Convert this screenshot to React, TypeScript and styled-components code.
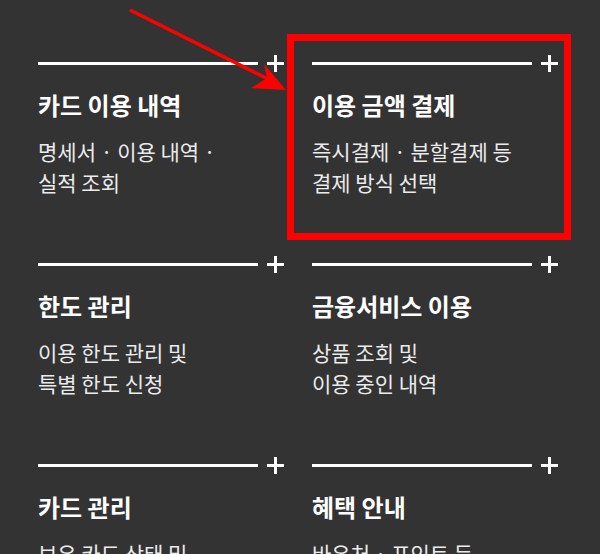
import React from "react";
import { styled, createGlobalStyle } from "styled-components";

interface MenuItem {
  title: string;
  lines: string[];
}

const menuItems: MenuItem[] = [
  { title: "카드 이용 내역", lines: ["명세서 · 이용 내역 ·", "실적 조회"] },
  { title: "이용 금액 결제", lines: ["즉시결제 · 분할결제 등", "결제 방식 선택"] },
  { title: "한도 관리", lines: ["이용 한도 관리 및", "특별 한도 신청"] },
  { title: "금융서비스 이용", lines: ["상품 조회 및", "이용 중인 내역"] },
  { title: "카드 관리", lines: ["보유 카드 상태 및", "분실 · 재발급 신청"] },
  { title: "혜택 안내", lines: ["바우처 · 포인트 등", "이벤트 혜택 확인"] },
];

const GlobalStyle = createGlobalStyle`
  html, body {
    margin: 0;
    padding: 0;
    background: #333333;
  }
  body {
    font-family: "Noto Sans CJK KR", "Noto Sans", sans-serif;
    -webkit-font-smoothing: antialiased;
  }
`;

const Page = styled.div`
  position: relative;
  width: 600px;
  height: 554px;
  overflow: hidden;
  background: #333333;
`;

const MenuGrid = styled.ul`
  list-style: none;
  margin: 0;
  padding: 55px 0 0 38px;
  display: grid;
  grid-template-columns: 246px 246px;
  column-gap: 28px;
  row-gap: 58px;
`;

const MenuCell = styled.li`
  display: flex;
  flex-direction: column;
`;

const CellHeader = styled.div`
  display: flex;
  align-items: center;
  gap: 9px;
  height: 17px;
`;

const Rule = styled.span`
  flex: 1;
  height: 3px;
  background: #ffffff;
`;

const Title = styled.h3`
  margin: 18px 0 0;
  font-size: 24px;
  line-height: 30px;
  font-weight: 700;
  color: #ffffff;
  white-space: nowrap;
`;

const Desc = styled.p`
  margin: 16px 0 0;
  font-size: 21px;
  line-height: 31px;
  font-weight: 400;
  color: #ebebeb;
  white-space: nowrap;
`;

// red call-out drawn over the grid
const Highlight = styled.div`
  position: absolute;
  left: 287px;
  top: 34px;
  width: 284px;
  height: 206px;
  box-sizing: border-box;
  border: 7px solid #ff0000;
  pointer-events: none;
`;

const Pointer = styled.svg`
  position: absolute;
  left: 0;
  top: 0;
  pointer-events: none;
`;

const PlusIcon = () => (
  <svg width="17" height="17" viewBox="0 0 17 17">
    <rect x="7" y="0" width="3" height="17" fill="#ffffff" />
    <rect x="0" y="7" width="17" height="3" fill="#ffffff" />
  </svg>
);

const App: React.FC = () => {
  return (
    <Page>
      <GlobalStyle />
      <MenuGrid>
        {menuItems.map((item) => (
          <MenuCell key={item.title}>
            <CellHeader>
              <Rule />
              <PlusIcon />
            </CellHeader>
            <Title>{item.title}</Title>
            <Desc>
              {item.lines.map((line, i) => (
                <React.Fragment key={line}>
                  {i > 0 && <br />}
                  {line}
                </React.Fragment>
              ))}
            </Desc>
          </MenuCell>
        ))}
      </MenuGrid>
      <Highlight />
      <Pointer width="600" height="554" viewBox="0 0 600 554">
        <line x1="130" y1="10" x2="268" y2="79" stroke="#ff0000" strokeWidth="3.5" />
        <polygon points="286,90 264,64 267,78 251,88" fill="#ff0000" />
      </Pointer>
    </Page>
  );
};

export default App;
